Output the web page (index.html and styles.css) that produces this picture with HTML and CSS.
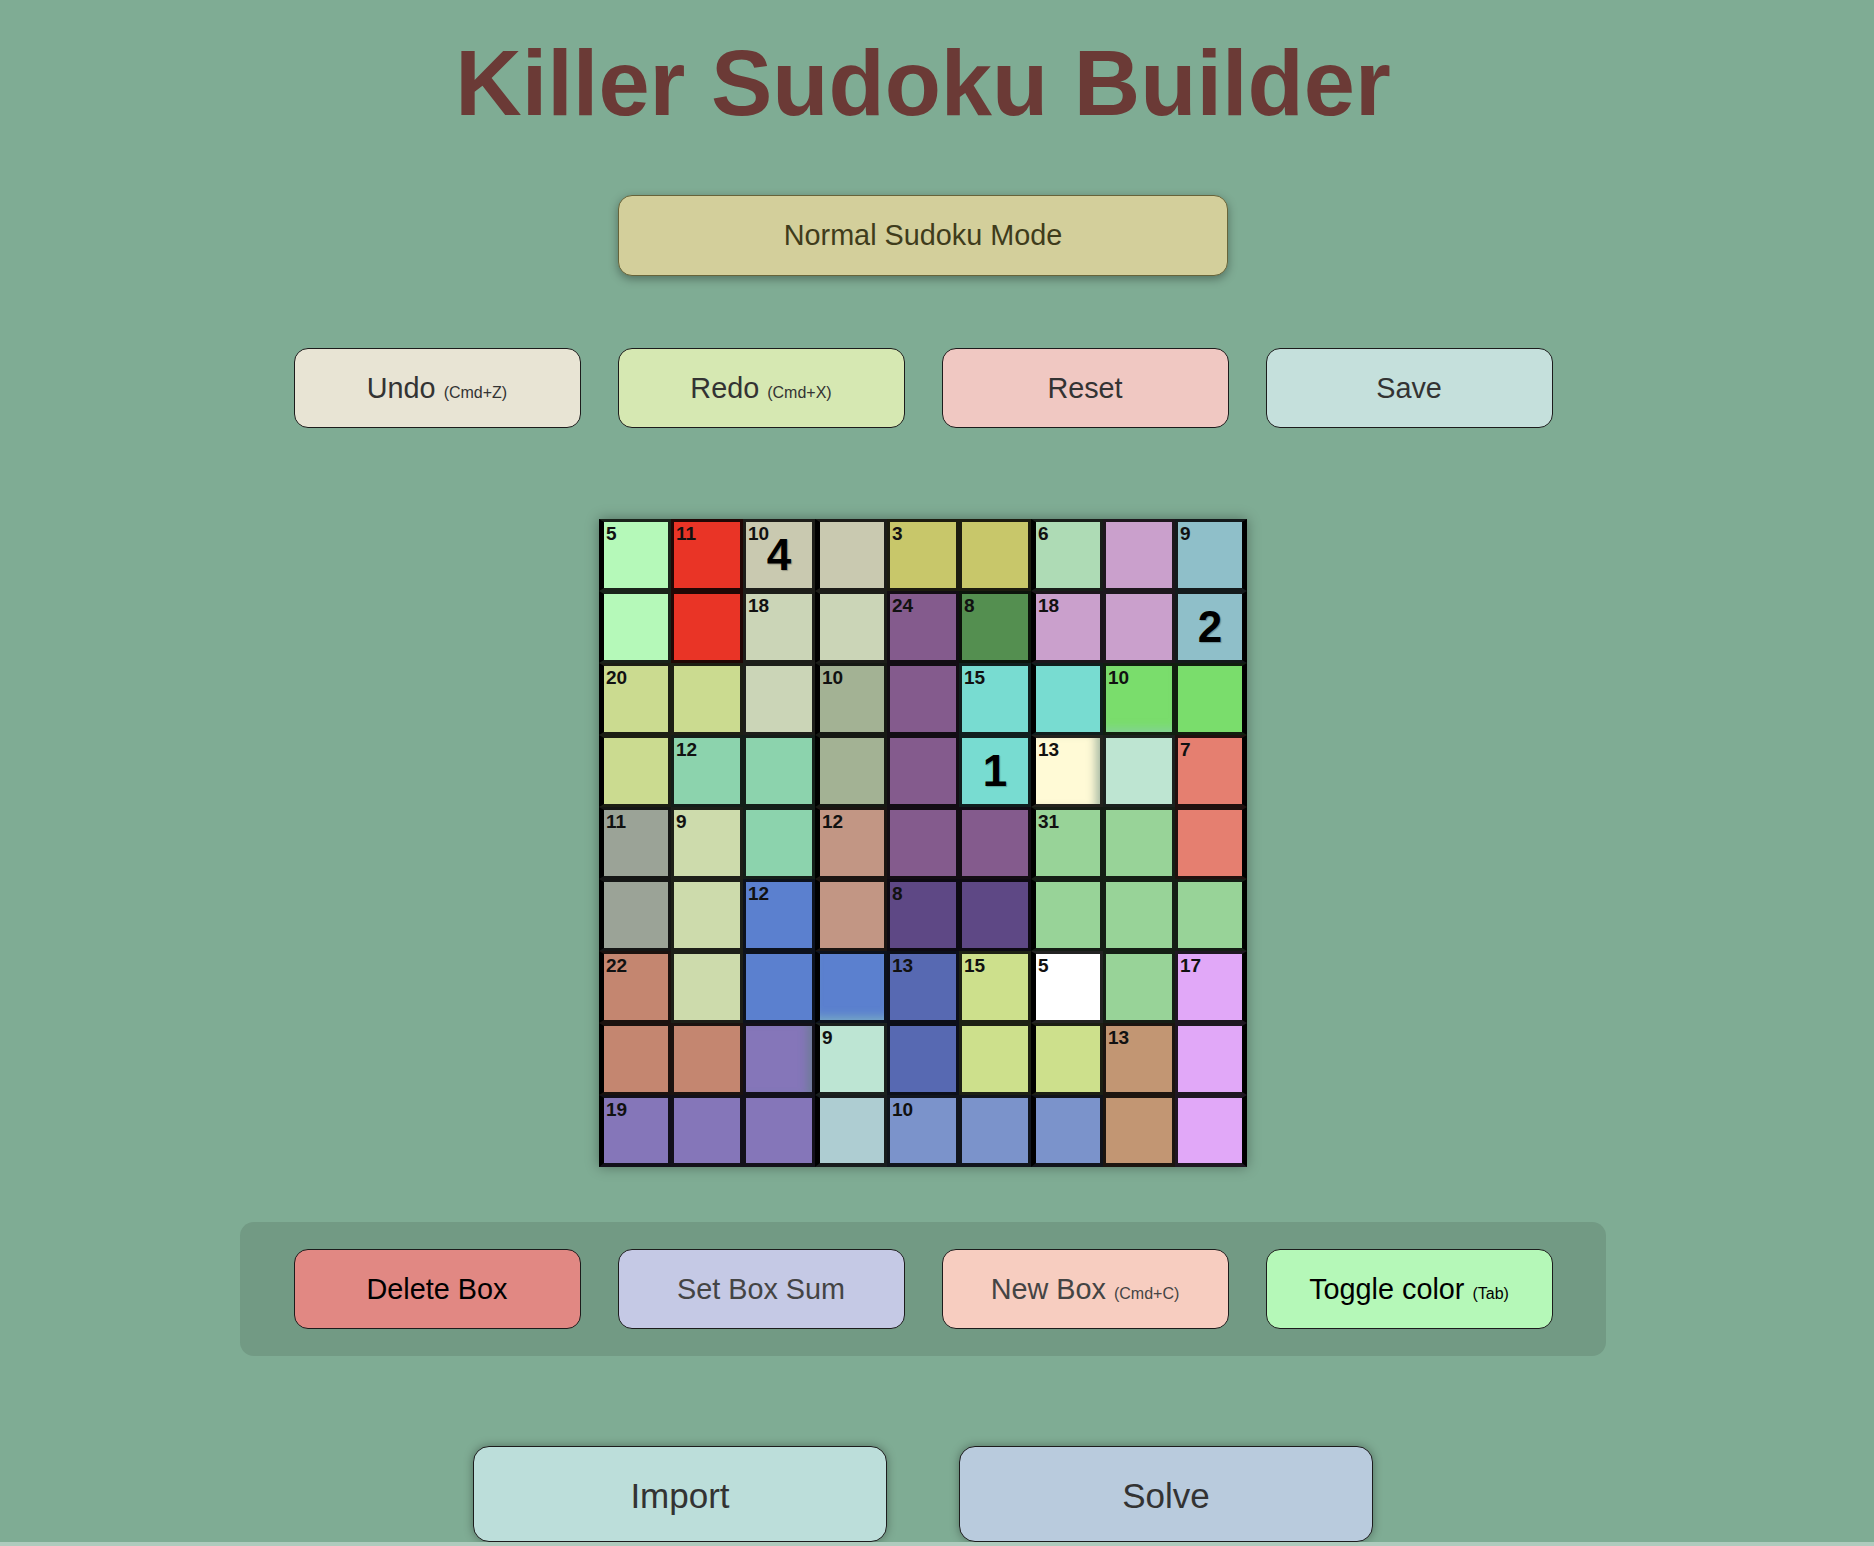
FILE: index.html
```html
<!DOCTYPE html>
<html lang="en">
<head>
<meta charset="utf-8">
<title>Killer Sudoku Builder</title>
<link rel="stylesheet" href="styles.css">
</head>
<body>
<div class="page">
  <h1 class="title">Killer Sudoku Builder</h1>

  <button class="mode-btn">Normal Sudoku Mode</button>

  <div class="btn-row">
    <button class="btn btn-undo">Undo <span class="hint">(Cmd+Z)</span></button>
    <button class="btn btn-redo">Redo <span class="hint">(Cmd+X)</span></button>
    <button class="btn btn-reset">Reset</button>
    <button class="btn btn-save">Save</button>
  </div>

  <div class="board">
    <!-- row 1 -->
    <div class="cell k1 bs"><span class="sum">5</span></div>
    <div class="cell k2"><span class="sum">11</span></div>
    <div class="cell k3"><span class="sum">10</span><span class="val">4</span></div>
    <div class="cell k3 bs"></div>
    <div class="cell k4"><span class="sum">3</span></div>
    <div class="cell k4"></div>
    <div class="cell k5 bs"><span class="sum">6</span></div>
    <div class="cell k6"></div>
    <div class="cell k7 be"><span class="sum">9</span></div>
    <!-- row 2 -->
    <div class="cell k1 bs"></div>
    <div class="cell k2"></div>
    <div class="cell k8"><span class="sum">18</span></div>
    <div class="cell k8 bs"></div>
    <div class="cell k9"><span class="sum">24</span></div>
    <div class="cell k10"><span class="sum">8</span></div>
    <div class="cell k6 bs"><span class="sum">18</span></div>
    <div class="cell k6"></div>
    <div class="cell k7 be"><span class="val">2</span></div>
    <!-- row 3 -->
    <div class="cell k11 bs"><span class="sum">20</span></div>
    <div class="cell k11"></div>
    <div class="cell k8"></div>
    <div class="cell k12 bs"><span class="sum">10</span></div>
    <div class="cell k9"></div>
    <div class="cell k13"><span class="sum">15</span></div>
    <div class="cell k13 bs"></div>
    <div class="cell k14 glow-b"><span class="sum">10</span></div>
    <div class="cell k14 be"></div>
    <!-- row 4 -->
    <div class="cell k11 bs"></div>
    <div class="cell k15"><span class="sum">12</span></div>
    <div class="cell k15"></div>
    <div class="cell k12 bs"></div>
    <div class="cell k9"></div>
    <div class="cell k13"><span class="val">1</span></div>
    <div class="cell k16 bs glow-r"><span class="sum">13</span></div>
    <div class="cell k17"></div>
    <div class="cell k18 be"><span class="sum">7</span></div>
    <!-- row 5 -->
    <div class="cell k19 bs"><span class="sum">11</span></div>
    <div class="cell k20"><span class="sum">9</span></div>
    <div class="cell k15"></div>
    <div class="cell k21 bs"><span class="sum">12</span></div>
    <div class="cell k9"></div>
    <div class="cell k9"></div>
    <div class="cell k22 bs"><span class="sum">31</span></div>
    <div class="cell k22"></div>
    <div class="cell k18 be"></div>
    <!-- row 6 -->
    <div class="cell k19 bs"></div>
    <div class="cell k20"></div>
    <div class="cell k23"><span class="sum">12</span></div>
    <div class="cell k21 bs"></div>
    <div class="cell k24"><span class="sum">8</span></div>
    <div class="cell k24"></div>
    <div class="cell k22 bs"></div>
    <div class="cell k22"></div>
    <div class="cell k22 be"></div>
    <!-- row 7 -->
    <div class="cell k25 bs"><span class="sum">22</span></div>
    <div class="cell k20"></div>
    <div class="cell k23"></div>
    <div class="cell k23 bs glow-b"></div>
    <div class="cell k26"><span class="sum">13</span></div>
    <div class="cell k27"><span class="sum">15</span></div>
    <div class="cell k28 bs"><span class="sum">5</span></div>
    <div class="cell k22"></div>
    <div class="cell k29 be"><span class="sum">17</span></div>
    <!-- row 8 -->
    <div class="cell k25 bs"></div>
    <div class="cell k25"></div>
    <div class="cell k30 glow-r"></div>
    <div class="cell k31 bs"><span class="sum">9</span></div>
    <div class="cell k26"></div>
    <div class="cell k27"></div>
    <div class="cell k27 bs"></div>
    <div class="cell k32"><span class="sum">13</span></div>
    <div class="cell k29 be"></div>
    <!-- row 9 -->
    <div class="cell k30 bs lr"><span class="sum">19</span></div>
    <div class="cell k30 lr"></div>
    <div class="cell k30 lr"></div>
    <div class="cell k33 bs lr"></div>
    <div class="cell k34 lr"><span class="sum">10</span></div>
    <div class="cell k34 lr"></div>
    <div class="cell k34 bs lr"></div>
    <div class="cell k32 lr"></div>
    <div class="cell k29 be lr"></div>
  </div>

  <div class="panel">
    <div class="btn-row">
      <button class="btn btn-delete">Delete Box</button>
      <button class="btn btn-sum">Set Box Sum</button>
      <button class="btn btn-new">New Box <span class="hint">(Cmd+C)</span></button>
      <button class="btn btn-toggle">Toggle color <span class="hint">(Tab)</span></button>
    </div>
  </div>

  <div class="bottom-row">
    <button class="big-btn btn-import">Import</button>
    <button class="big-btn btn-solve">Solve</button>
  </div>
</div>
</body>
</html>
```

FILE: styles.css
```css
html {
  background: #aecbbd;
}

body {
  margin: 0;
  font-family: "Liberation Sans", Arial, Helvetica, sans-serif;
}

.page {
  background: #7fac94;
  padding-right: 28px;
  display: flex;
  flex-direction: column;
  align-items: center;
}

.title {
  margin: 30px 0 0;
  font-size: 92px;
  line-height: 106px;
  font-weight: bold;
  color: #6b3a36;
  text-align: center;
}

button {
  font-family: "Liberation Sans", Arial, Helvetica, sans-serif;
  cursor: pointer;
  padding: 0;
}

.mode-btn {
  margin-top: 59px;
  width: 610px;
  height: 81px;
  background: #d3cf9b;
  border: 1px solid #66643a;
  border-radius: 14px;
  box-shadow: 0 3px 10px rgba(0, 0, 0, 0.35);
  color: #3f3c1b;
  font-size: 28.8px;
}

.btn-row {
  display: flex;
  gap: 37px;
}

.page > .btn-row {
  margin-top: 72px;
}

.btn {
  width: 287px;
  height: 80px;
  border: 1px solid #1c1c1c;
  border-radius: 14px;
  color: #333;
  font-size: 28.8px;
}

.hint {
  font-size: 16px;
}

.btn-undo { background: #e8e4d4; }
.btn-redo { background: #d6e8b2; }
.btn-reset { background: #f0c8c2; }
.btn-save { background: #c5e0dc; }

.btn-delete { background: #e18883; color: #000; }
.btn-sum { background: #c5c9e5; color: #444; }
.btn-new { background: #f7cdc0; color: #444; }
.btn-toggle { background: #b5f8b8; color: #000; }

/* ---------- board ---------- */
.board {
  margin-top: 91px;
  display: grid;
  grid-template-columns: repeat(9, 72px);
  grid-template-rows: repeat(9, 72px);
  box-shadow: 0 0 12px rgba(0, 0, 0, 0.35);
}

.cell {
  position: relative;
  box-sizing: border-box;
  border: 3px solid rgba(0, 0, 0, 0.86);
  display: flex;
  align-items: center;
  justify-content: center;
}

.cell.bs { border-left: 5px solid #000; }
.cell.be { border-right: 5px solid #000; }
.cell.lr { border-bottom-width: 4px; }

.sum {
  position: absolute;
  top: 2px;
  left: 2px;
  font-size: 19px;
  line-height: 19px;
  font-weight: bold;
  color: #111;
}

.val {
  font-size: 44px;
  line-height: 1;
  font-weight: bold;
  color: #000;
  text-shadow: 1px 1px 1px rgba(0, 0, 0, 0.25);
}

.glow-r { box-shadow: inset -10px 0 10px -6px rgba(90, 130, 120, 0.55); }
.glow-b { box-shadow: inset 0 -10px 10px -7px rgba(140, 200, 190, 0.6); }

.k1 { background: #b5f9b9; }
.k2 { background: #e93426; }
.k3 { background: #c9c9b0; }
.k4 { background: #c8c76a; }
.k5 { background: #aedbb5; }
.k6 { background: #caa0cc; }
.k7 { background: #8fbfc9; }
.k8 { background: #cbd5b7; }
.k9 { background: #845b8d; }
.k10 { background: #548f50; }
.k11 { background: #cbdb90; }
.k12 { background: #a3b294; }
.k13 { background: #78dcd1; }
.k14 { background: #7add6c; }
.k15 { background: #8cd3ad; }
.k16 { background: #fffad6; }
.k17 { background: #bee5d2; }
.k18 { background: #e57f70; }
.k19 { background: #9ba397; }
.k20 { background: #cddbac; }
.k21 { background: #c29684; }
.k22 { background: #98d398; }
.k23 { background: #5b80cf; }
.k24 { background: #5e4885; }
.k25 { background: #c48670; }
.k26 { background: #5769b2; }
.k27 { background: #cde08c; }
.k28 { background: #ffffff; }
.k29 { background: #e1a8f8; }
.k30 { background: #8576b9; }
.k31 { background: #bde5d3; }
.k32 { background: #c29673; }
.k33 { background: #aecdd2; }
.k34 { background: #7b93cb; }

/* ---------- panel ---------- */
.panel {
  margin-top: 55px;
  width: 1366px;
  box-sizing: border-box;
  padding: 27px 0;
  background: #729a84;
  border-radius: 14px;
  display: flex;
  justify-content: center;
}

/* ---------- bottom ---------- */
.bottom-row {
  margin-top: 90px;
  display: flex;
  gap: 72px;
}

.big-btn {
  width: 414px;
  height: 96px;
  padding-top: 4px;
  border: 1px solid #1c1c1c;
  border-radius: 16px;
  box-shadow: 0 0 10px rgba(0, 0, 0, 0.35);
  color: #333;
  font-size: 35px;
}

.btn-import { background: #bcdeda; }
.btn-solve { background: #b9cbdd; }
```
